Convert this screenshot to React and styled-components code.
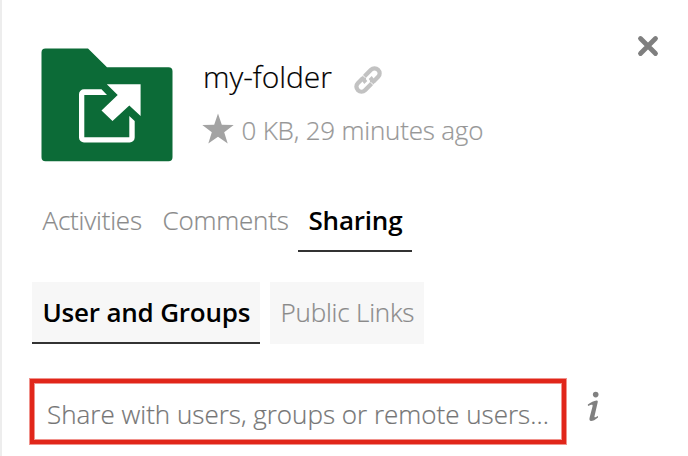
import React from "react";
import styled, { createGlobalStyle } from "styled-components";

const GlobalStyle = createGlobalStyle`
  * { box-sizing: border-box; }
  body { margin: 0; background: #fff; font-family: "Open Sans", sans-serif; }
  button { font: inherit; background: none; border: 0; padding: 0; margin: 0; }
`;

const Sidebar = styled.aside`
  width: 688px;
  height: 456px;
  overflow: hidden;
  border-left: 2px solid #ededed;
  padding: 36px 29px 0 30px;
  background: #fff;
  font-weight: 300;
`;

const Header = styled.header`
  display: flex;
  align-items: flex-start;
  height: 154px;
`;

const FolderIcon = styled.svg`
  flex: none;
  width: 132px;
  height: 114px;
  margin: 12px 0 0 9px;
`;

const Details = styled.div`
  flex: 1;
  padding: 21px 0 0 29px;
`;

const TitleRow = styled.div`
  display: flex;
  align-items: center;
  height: 40px;
  gap: 21px;
`;

const Title = styled.h1`
  margin: 0 0 0 1px;
  font-size: 30px;
  line-height: 40px;
  font-weight: 300;
  letter-spacing: -0.05px;
  -webkit-text-stroke: 0.2px currentColor;
  color: #000;
  white-space: nowrap;
`;

const LinkIcon = styled.svg`
  width: 30px;
  height: 30px;
  margin-top: 5px;
`;

const Meta = styled.div`
  display: flex;
  align-items: center;
  gap: 7.5px;
  height: 36px;
  margin-top: 15px;
  font-size: 26px;
  line-height: 36px;
  letter-spacing: -0.2px;
  -webkit-text-stroke: 0.2px currentColor;
  color: #979797;
  white-space: nowrap;
`;

const StarIcon = styled.svg`
  flex: none;
  width: 32px;
  height: 32px;
  margin-top: -2px;
`;

const CloseButton = styled.button`
  width: 22px;
  height: 22px;
  margin-top: -1px;
  color: #7f7f7f;
  svg { display: block; }
`;

const Tabs = styled.nav`
  display: flex;
  height: 62px;
`;

const Tab = styled.button`
  height: 62px;
  width: ${(p) => p.$width}px;
  padding: 0 0 ${(p) => (p.$active ? 0 : 2)}px 10.5px;
  border-bottom: ${(p) => (p.$active ? "2px solid #333" : "0")};
  font-size: 26px;
  line-height: 60px;
  font-weight: ${(p) => (p.$active ? 600 : 300)};
  letter-spacing: -0.2px;
  -webkit-text-stroke: ${(p) => (p.$active ? 0 : 0.2)}px currentColor;
  text-align: left;
  color: ${(p) => (p.$active ? "#000" : "#8a8a8a")};
  white-space: nowrap;
`;

const SubTabs = styled(Tabs)`
  gap: 10px;
  margin-top: 30px;
`;

const SubTab = styled(Tab)`
  background: #f7f7f7;
`;

const ShareRow = styled.div`
  display: flex;
  align-items: flex-start;
  margin: 35px 0 0 -2px;
`;

const ShareInput = styled.input`
  width: 536px;
  height: 65px;
  border: 4px solid #e1261a;
  border-radius: 0;
  box-shadow: 0 0 0 1px rgba(225, 38, 26, 0.5), inset 0 0 0 1px rgba(225, 38, 26, 0.5);
  padding: 5px 8px 0 13px;
  margin: 0;
  outline: 0;
  background: #fff;
  font: 300 26px "Open Sans", sans-serif;
  -webkit-text-stroke: 0.2px #757575;
  &::placeholder { color: #757575; opacity: 1; }
`;

const InfoIcon = styled.svg`
  width: 14px;
  height: 32px;
  margin: 12px 0 0 21px;
`;

const tabs = [
  { label: "Activities", width: 120 },
  { label: "Comments", width: 146 },
  { label: "Sharing", width: 114, active: true },
];

const shareTabs = [
  { label: "User and Groups", width: 228, active: true },
  { label: "Public Links", width: 154 },
];

export default function App() {
  return (
    <>
      <GlobalStyle />
      <Sidebar>
        <Header>
          <FolderIcon viewBox="0 0 132 114">
            <path
              fill="#0c6b37"
              d="M4.500.5H47L66 19.300h61.500a4 4 0 0 1 4 4v86a4 4 0 0 1-4 4h-123a4 4 0 0 1-4-4V4.500a4 4 0 0 1 4-4Z"
            />
            <path
              fill="#fff"
              d="M65.800 36.300H99.600V68L88.300 57.500 71.500 73 60.500 62.500 76.700 47ZM60.500 41.300H43a5 5 0 0 0-5 5V89.500a5 5 0 0 0 5 5H88.700a5 5 0 0 0 5-5V73L88.300 68V89.200H43.300V47H66Z"
            />
          </FolderIcon>
          <Details>
            <TitleRow>
              <Title>my-folder</Title>
              <LinkIcon viewBox="0 0 30 30" fill="none" strokeWidth="4.300">
                <g stroke="#c2c2c2">
                  <path d="M17.200 12.500C20.100 15.400 19.600 17.600 17.700 19.500L12 25.200C10 27.200 7 27.200 5 25.200S2.800 20.200 4.800 18.200L10 13" />
                  <path d="M12.800 17.500C9.900 14.600 10.400 12.400 12.300 10.500L18 4.800C20 2.800 23 2.800 25 4.800S27.200 9.800 25.200 11.800L20 17" />
                </g>
                <path d="M9.300 9.800l3 3M17.700 17.200l3 3" stroke="#fff" strokeWidth="1" />
              </LinkIcon>
            </TitleRow>
            <Meta>
              <StarIcon viewBox="0 0 32 32">
                <path fill="#a3a3a3" d="M16 .5l3.800 11.300 11.900.2-9.500 7.200 3.500 11.300L16 23.700l-9.700 6.800 3.500-11.300L.3 12l11.900-.2Z" />
              </StarIcon>
              <span>0 KB, 29 minutes ago</span>
            </Meta>
          </Details>
          <CloseButton aria-label="Close">
            <svg width="22" height="22" viewBox="0 0 22 22">
              <path d="M3.500 3.500l15 15m0-15l-15 15" stroke="currentColor" strokeWidth="4.800" strokeLinecap="round" />
            </svg>
          </CloseButton>
        </Header>
        <Tabs>
          {tabs.map((t) => (
            <Tab key={t.label} $active={t.active} $width={t.width}>
              {t.label}
            </Tab>
          ))}
        </Tabs>
        <SubTabs>
          {shareTabs.map((t) => (
            <SubTab key={t.label} $active={t.active} $width={t.width}>
              {t.label}
            </SubTab>
          ))}
        </SubTabs>
        <ShareRow>
          <ShareInput placeholder="Share with users, groups or remote users..." />
          <InfoIcon viewBox="0 0 14 32" fill="#808080">
            <circle cx="8.700" cy="3.600" r="2.800" />
            <path d="M.8 13.500C4 11.300 7 9.800 9.500 9.500 11 9.300 10.900 10.300 10.600 11.800L7.500 25.200C7.200 26.800 8 26.700 11 25V26.500C8 29 5.500 30.200 3.800 30 2.200 29.800 2.300 28 2.700 26.200L5.500 15.500C6 13.300 5.200 13.200 1 15Z" />
          </InfoIcon>
        </ShareRow>
      </Sidebar>
    </>
  );
}
